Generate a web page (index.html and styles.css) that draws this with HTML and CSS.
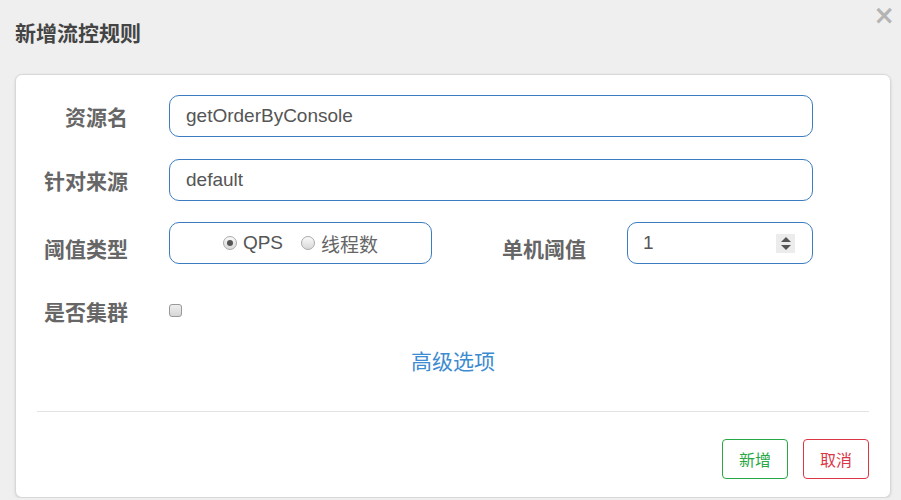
FILE: index.html
```html
<!DOCTYPE html>
<html lang="zh-CN">
  <head>
    <meta charset="UTF-8" />
    <title>新增流控规则</title>
    <link rel="stylesheet" href="styles.css">
  </head>
  <body>
    <div class="modal">
      <div class="modal-header">
        <h4>新增流控规则</h4>
        <button type="button" class="close">&times;</button>
      </div>

      <div class="card">
        <form class="rule-form">
          <div class="row">
            <label class="label">资源名</label>
            <div class="field">getOrderByConsole</div>
          </div>

          <div class="row">
            <label class="label">针对来源</label>
            <div class="field">default</div>
          </div>

          <div class="row row-split">
            <label class="label low">阈值类型</label>
            <div class="field radios">
              <span class="radio checked"></span><span class="radio-text">QPS</span>
              <span class="radio"></span><span class="radio-text">线程数</span>
            </div>
            <label class="label low">单机阈值</label>
            <div class="field number">
              <span>1</span>
              <span class="spinner"><i class="up"></i><i class="down"></i></span>
            </div>
          </div>

          <div class="row row-check">
            <label class="label">是否集群</label>
            <div><span class="checkbox"></span></div>
          </div>

          <div class="advanced"><a href="#">高级选项</a></div>
        </form>

        <hr />

        <div class="footer">
          <button type="button" class="btn btn-add">新增</button>
          <button type="button" class="btn btn-cancel">取消</button>
        </div>
      </div>
    </div>
  </body>
</html>
```

FILE: styles.css
```css
body {
  margin: 0;
  background-color: #efefef;
  font-family: "Liberation Sans", "Noto Sans CJK SC", sans-serif;
  color: #555;
}
.modal {
  width: 901px;
}
.modal-header {
  display: flex;
  justify-content: space-between;
  align-items: flex-start;
  height: 74px;
  padding: 0 6px 0 15px;
  box-sizing: border-box;
}
.modal-header h4 {
  margin: 20px 0 0;
  font-family: "Noto Sans CJK SC", sans-serif;
  font-size: 21px;
  line-height: 25px;
  font-weight: bold;
  color: #444;
}
.close {
  margin-top: 2px;
  padding: 0;
  background: none;
  border: none;
  font-family: "DejaVu Sans", sans-serif;
  font-size: 26px;
  line-height: 26px;
  font-weight: bold;
  color: #b4b4b4;
  cursor: pointer;
}
.card {
  margin-left: 15px;
  width: 876px;
  height: 424px;
  box-sizing: border-box;
  background-color: white;
  border: 1px solid #d8d8d8;
  border-radius: 7px;
  box-shadow: 0 1px 3px rgba(0, 0, 0, 0.12);
}
.rule-form {
  padding: 20px 77px 0 0;
}
.row {
  display: grid;
  grid-template-columns: 112px 1fr;
  column-gap: 41px;
  align-items: center;
  height: 42px;
  margin-bottom: 21.5px;
}
.row-split {
  grid-template-columns: 112px 263px 1fr 186px;
}
.row-check {
  height: 50px;
  margin-bottom: 0;
}
.label {
  text-align: right;
  font-family: "Noto Sans CJK SC", sans-serif;
  font-size: 21px;
  font-weight: bold;
  color: #666;
}
.label.low {
  padding-top: 9px;
}
.field {
  display: flex;
  align-items: center;
  height: 42px;
  box-sizing: border-box;
  padding: 0 16px;
  border: 1px solid #3c7cc0;
  border-radius: 10px;
  font-size: 19px;
  color: #555;
}
.radios {
  justify-content: center;
  padding: 0;
}
.radio {
  width: 14px;
  height: 14px;
  box-sizing: border-box;
  border: 1px solid #aaa;
  border-radius: 50%;
  background: linear-gradient(#fafafa, #d8d8d8);
  position: relative;
  margin-right: 6px;
}
.radio.checked::after {
  content: "";
  position: absolute;
  left: 3px;
  top: 3px;
  width: 6px;
  height: 6px;
  border-radius: 50%;
  background-color: #555;
}
.radio-text {
  margin-right: 18px;
}
.radio-text:last-child {
  margin-right: 0;
  font-family: "Noto Sans CJK SC", sans-serif;
  font-size: 19px;
  color: #666;
}
.number {
  justify-content: space-between;
  padding: 0 17px 0 15px;
}
.spinner {
  display: flex;
  flex-direction: column;
  justify-content: center;
  align-items: center;
  gap: 3px;
  width: 19px;
  height: 19px;
  background-color: #ececec;
}
.spinner i {
  width: 0;
  height: 0;
  border-left: 5px solid transparent;
  border-right: 5px solid transparent;
}
.spinner .up {
  border-bottom: 5px solid #555;
}
.spinner .down {
  border-top: 5px solid #555;
}
.checkbox {
  display: block;
  width: 13px;
  height: 13px;
  box-sizing: border-box;
  border: 1px solid #999;
  border-radius: 3px;
  background: linear-gradient(#eee, #d6d6d6);
}
.advanced {
  margin: 12px -77px 0 0;
  text-align: center;
  line-height: 24px;
}
.advanced a {
  font-family: "Noto Sans CJK SC", sans-serif;
  font-size: 21px;
  color: #3d8bd0;
  text-decoration: none;
}
hr {
  margin: 35px 21px 0;
  border: none;
  border-top: 1px solid #e3e3e3;
}
.footer {
  display: flex;
  justify-content: flex-end;
  gap: 15px;
  padding: 27px 21px 0;
}
.btn {
  width: 66px;
  height: 40px;
  background-color: white;
  border-radius: 4px;
  font-family: "Noto Sans CJK SC", sans-serif;
  font-size: 16px;
  cursor: pointer;
}
.btn-add {
  color: #28a745;
  border: 1px solid #28a745;
}
.btn-cancel {
  color: #dc3545;
  border: 1px solid #dc3545;
}
```
